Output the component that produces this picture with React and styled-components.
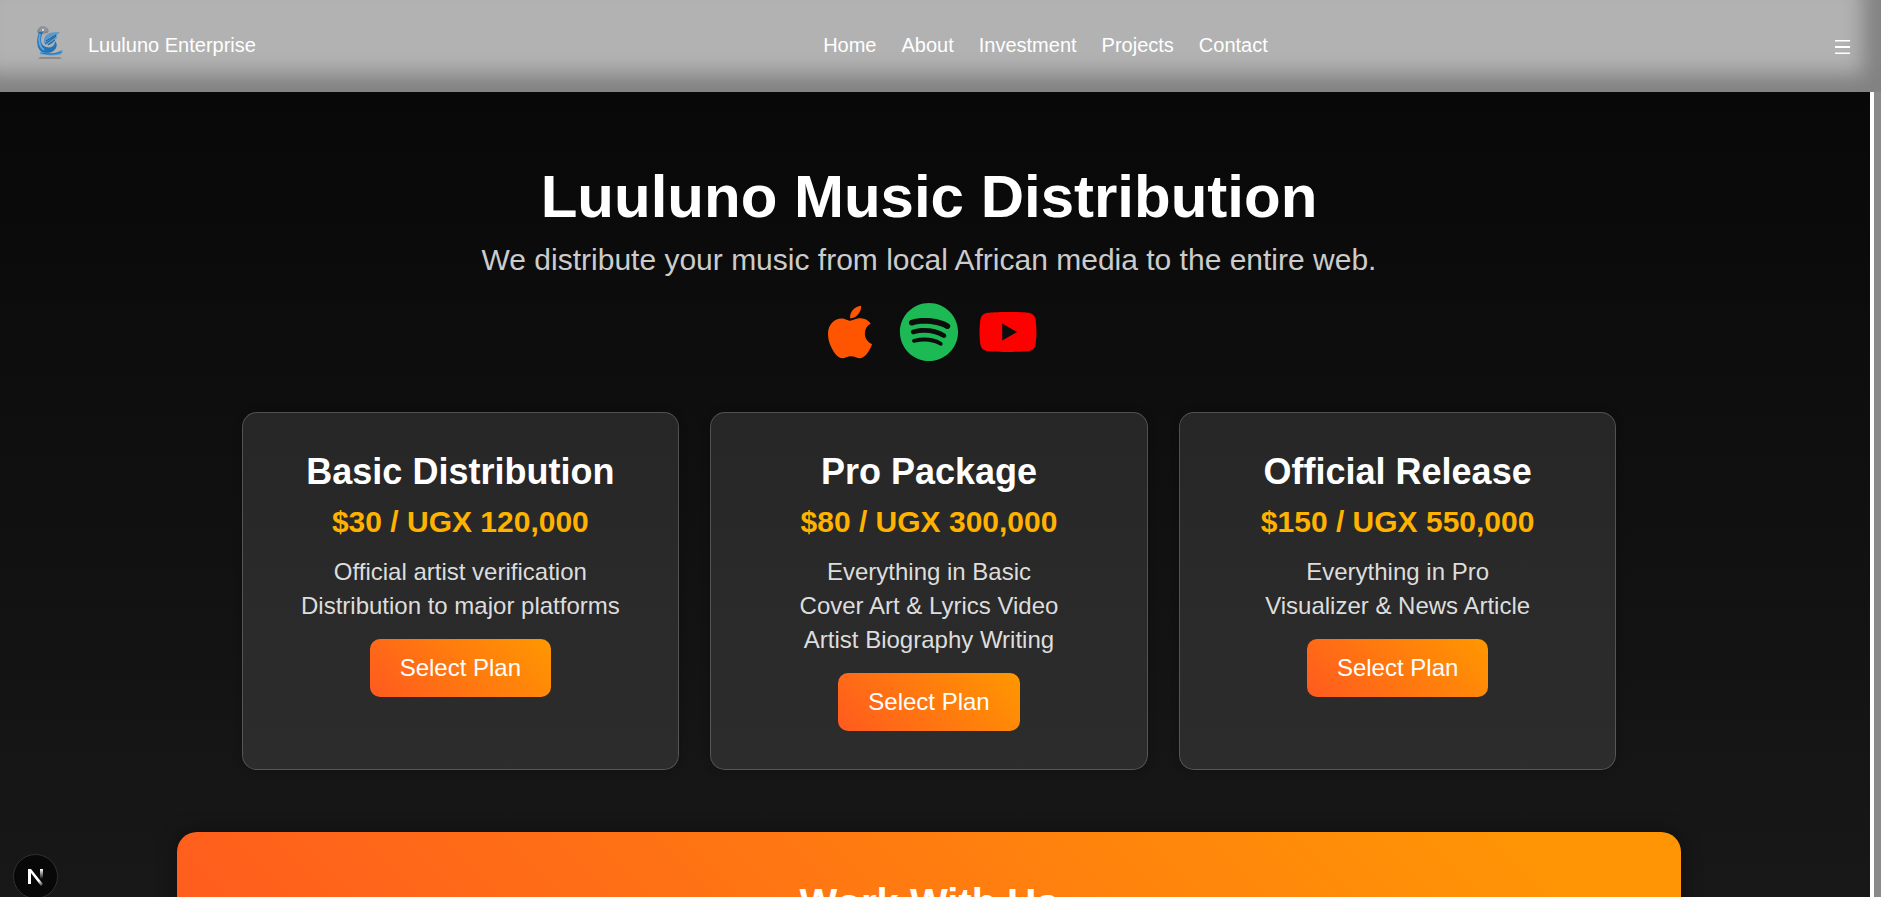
import React from 'react';
import styled, { createGlobalStyle } from 'styled-components';
import { FaApple, FaSpotify, FaYoutube } from 'react-icons/fa';

const GlobalStyle = createGlobalStyle`
	* {
		box-sizing: border-box;
		margin: 0;
		padding: 0;
	}
	body {
		background: #ffffff;
		font-family: 'Liberation Sans', Arial, sans-serif;
		color: white;
	}
`;

const Page = styled.div`
	display: flex;
	flex-direction: column;
	height: 100vh;
	overflow: hidden;
`;

const Header = styled.header`
	display: flex;
	justify-content: space-between;
	align-items: center;
	flex-shrink: 0;
	height: 92px;
	padding: 0 30px 2px;
	background: #b2b2b2;
	box-shadow: inset -18px -18px 20px #828282;
`;

const Brand = styled.a`
	display: flex;
	align-items: center;
	gap: 19px;
	color: white;
	font-size: 20px;
	text-decoration: none;
`;

const Nav = styled.nav`
	display: flex;
	gap: 25px;
`;

const NavLink = styled.a`
	color: white;
	font-size: 20px;
	text-decoration: none;
`;

const MenuButton = styled.button`
	display: flex;
	padding-top: 4px;
	border: none;
	background: none;
	color: white;
	cursor: pointer;
`;

const Body = styled.div`
	display: flex;
	flex: 1;
	min-height: 0;
`;

const Main = styled.main`
	flex: 1;
	display: flex;
	flex-direction: column;
	align-items: center;
	padding: 70px 12px 0 0;
	overflow: hidden;
	background: linear-gradient(180deg, #080808 0%, #181818 100%);
	text-align: center;
`;

const ScrollTrack = styled.div`
	width: 11px;
	padding-left: 4px;
	background: white;
`;

const ScrollThumb = styled.div`
	height: 100%;
	background: #8a8a8a;
`;

const Title = styled.h1`
	flex-shrink: 0;
	font-size: 60px;
	line-height: 69px;
	font-weight: bold;
`;

const Subtitle = styled.p`
	flex-shrink: 0;
	margin-top: 12px;
	font-size: 30px;
	line-height: 34px;
	color: #cccccc;
`;

const Platforms = styled.div`
	display: flex;
	flex-shrink: 0;
	gap: 19px;
	margin-top: 25px;
	font-size: 60px;
`;

const Plans = styled.section`
	display: grid;
	flex-shrink: 0;
	grid-template-columns: repeat(3, 1fr);
	gap: 31px;
	width: 74%;
	margin-top: 50px;
`;

const PlanCard = styled.article`
	display: flex;
	flex-direction: column;
	align-items: center;
	padding: 38px;
	border: 1px solid rgba(255, 255, 255, 0.2);
	border-radius: 15px;
	background: rgba(255, 255, 255, 0.1);
	box-shadow: 0 0 10px rgba(0, 0, 0, 0.2);
`;

const PlanName = styled.h2`
	font-size: 36px;
	line-height: 41px;
`;

const Price = styled.p`
	margin-top: 13px;
	font-size: 30px;
	line-height: 34px;
	font-weight: bold;
	color: #ffb300;
`;

const Features = styled.ul`
	margin: 16px 0;
	list-style: none;
	font-size: 24px;
	line-height: 34px;
	color: #dddddd;
`;

const PlanButton = styled.button`
	padding: 15px 30px;
	border: none;
	border-radius: 10px;
	background: linear-gradient(45deg, #ff5a1f, #ff9800);
	color: white;
	font-family: inherit;
	font-size: 24px;
	line-height: 28px;
	cursor: pointer;
`;

const WorkWithUs = styled.section`
	flex-shrink: 0;
	width: 81%;
	margin-top: 62px;
	padding: 48px;
	border-radius: 20px;
	background: linear-gradient(45deg, #ff5a1f, #ff9505 90%);
	box-shadow: 0 0 20px rgba(0, 0, 0, 0.4);

	h2 {
		font-size: 40px;
		line-height: 46px;
	}
`;

const DevBadge = styled.button`
	position: fixed;
	left: 13px;
	bottom: -2px;
	display: flex;
	align-items: center;
	justify-content: center;
	width: 45px;
	height: 45px;
	border: 1px solid #303030;
	border-radius: 50%;
	background: #080808;
`;

const SwanLogo = () => (
	<svg width="39" height="40" viewBox="0 0 39 40" aria-hidden="true">
		<path d="M7 7C8 1 14 0 17 3c2 1 2 3 1 5l-5 1-5-1z" fill="#858b91" />
		<path d="M10 6c1-4 6-4 6 0" fill="none" stroke="#a5aaae" strokeWidth="1" />
		<circle cx="13" cy="5" r="1" fill="#eeeeee" />
		<path
			d="M9 7h4c-3 7-3 13 3 15 7 2 9-3 9-6 4 4 1 12-9 12C8 28 5 18 9 7z"
			fill="#2274b8"
		/>
		<path d="M10 9c-2 8 0 13 4 16" fill="none" stroke="#64a3d2" strokeWidth="2" />
		<path d="M14 18c-1-8 4-11 16-11-3 2-4 4-3 6-2 1-3 4-5 6-3 1-6 1-8-1z" fill="#5b99ca" />
		<path
			d="M15 19l11-8M16 16l10-6M18 20l7-5"
			fill="none"
			stroke="#165d99"
			strokeWidth="1"
		/>
		<path d="M10 27c6 0 9 2 15 1l7-3c2 2-1 5-4 5-7 1-12 0-18-1z" fill="#579aca" />
		<path d="M12 28c5 1 10 2 19-1" fill="none" stroke="#2477b3" strokeWidth="1" />
		<path d="M10 32h20l2 2H8z" fill="#8c8c8c" />
	</svg>
);

const navItems = ['Home', 'About', 'Investment', 'Projects', 'Contact'];

const plans = [
	{
		name: 'Basic Distribution',
		price: '$30 / UGX 120,000',
		features: ['Official artist verification', 'Distribution to major platforms']
	},
	{
		name: 'Pro Package',
		price: '$80 / UGX 300,000',
		features: ['Everything in Basic', 'Cover Art & Lyrics Video', 'Artist Biography Writing']
	},
	{
		name: 'Official Release',
		price: '$150 / UGX 550,000',
		features: ['Everything in Pro', 'Visualizer & News Article']
	}
];

const App = () => {
	return (
		<Page>
			<GlobalStyle />
			<Header>
				<Brand href="#home">
					<SwanLogo />
					Luuluno Enterprise
				</Brand>
				<Nav>
					{navItems.map((item) => (
						<NavLink key={item} href={`#${item.toLowerCase()}`}>
							{item}
						</NavLink>
					))}
				</Nav>
				<MenuButton type="button" aria-label="Open menu">
					<svg width="16" height="16" viewBox="0 0 16 16" fill="currentColor">
						<path d="M0 1h15v1.5H0zM0 7h15v2H0zM0 13.5h15V15H0z" />
					</svg>
				</MenuButton>
			</Header>
			<Body>
				<Main>
					<Title>Luuluno Music Distribution</Title>
					<Subtitle>We distribute your music from local African media to the entire web.</Subtitle>
					<Platforms>
						<FaApple color="#ff5500" />
						<FaSpotify color="#1db954" />
						<FaYoutube color="#ff0000" />
					</Platforms>
					<Plans>
						{plans.map((plan) => (
							<PlanCard key={plan.name}>
								<PlanName>{plan.name}</PlanName>
								<Price>{plan.price}</Price>
								<Features>
									{plan.features.map((feature) => (
										<li key={feature}>{feature}</li>
									))}
								</Features>
								<PlanButton type="button">Select Plan</PlanButton>
							</PlanCard>
						))}
					</Plans>
					<WorkWithUs>
						<h2>Work With Us</h2>
					</WorkWithUs>
				</Main>
				<ScrollTrack>
					<ScrollThumb />
				</ScrollTrack>
			</Body>
			<DevBadge type="button" aria-label="Open dev tools">
				<svg width="18" height="18" viewBox="0 0 18 18" fill="none">
					<defs>
						<linearGradient id="stem" x1="0" y1="0" x2="0" y2="1">
							<stop stopColor="white" />
							<stop offset="1" stopColor="white" stopOpacity="0" />
						</linearGradient>
						<linearGradient id="slash" x1="8" y1="8" x2="16" y2="17" gradientUnits="userSpaceOnUse">
							<stop offset="0.5" stopColor="white" />
							<stop offset="1" stopColor="white" stopOpacity="0.2" />
						</linearGradient>
					</defs>
					<path d="M1 1h3l12 15-2 2L4 5v11H1z" fill="url(#slash)" />
					<path d="M13 1h3v10h-3z" fill="url(#stem)" />
				</svg>
			</DevBadge>
		</Page>
	);
};

export default App;
